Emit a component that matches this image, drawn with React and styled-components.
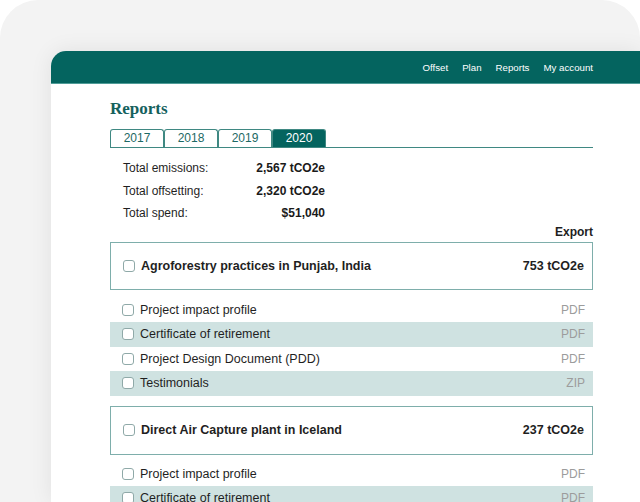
import React from 'react'
import styled, { createGlobalStyle } from 'styled-components'

const GlobalStyle = createGlobalStyle`
  html, body {
    margin: 0;
    padding: 0;
    background: #ffffff;
  }
  body {
    font-family: "Liberation Sans", Arial, sans-serif;
    color: #1f1f1f;
  }
`

const Backdrop = styled.div`
  width: 640px;
  height: 502px;
  box-sizing: border-box;
  background: #f3f3f3;
  border-radius: 38px 38px 0 0;
  padding: 51px 0 0 51px;
  overflow: hidden;
`

const AppWindow = styled.div`
  height: 100%;
  background: #ffffff;
  border-radius: 15px 0 0 0;
  box-shadow: 0 0 22px rgba(0, 0, 0, 0.08);
  overflow: hidden;
`

const TopBar = styled.header`
  height: 32px;
  background: #04645f;
  border-bottom: 1px solid #4f9c97;
  display: flex;
  justify-content: flex-end;
  align-items: center;
  gap: 14px;
  padding-right: 47px;
`

const NavLink = styled.a`
  color: #ffffff;
  font-size: 9.7px;
  text-decoration: none;
`

const Content = styled.main`
  padding: 16px 47px 0 59px;
`

const Title = styled.h1`
  margin: 0;
  font-family: "Liberation Serif", "DejaVu Serif", serif;
  font-size: 17px;
  font-weight: 700;
  color: #15615d;
  line-height: 18px;
`

const Tabs = styled.div`
  display: flex;
  margin-top: 11px;
  border-bottom: 1px solid #3f8882;
`

const Tab = styled.button`
  width: 54px;
  height: 18px;
  box-sizing: border-box;
  padding: 0;
  border: 1px solid #3f8882;
  border-bottom: none;
  border-radius: 3px 3px 0 0;
  background: ${p => (p.active ? '#04645f' : '#ffffff')};
  color: ${p => (p.active ? '#ffffff' : '#1d6964')};
  font-family: "Liberation Sans", Arial, sans-serif;
  font-size: 12px;
  line-height: 17px;
`

const Totals = styled.div`
  display: grid;
  grid-template-columns: 130px 72px;
  padding: 9px 0 0 13px;
  font-size: 12px;
  line-height: 22.5px;
`

const TotalValue = styled.span`
  text-align: right;
  font-weight: 700;
  color: #1a1a1a;
`

const ExportLabel = styled.div`
  text-align: right;
  font-size: 12px;
  font-weight: 700;
  line-height: 14px;
`

const ProjectCard = styled.div`
  margin-top: ${p => p.gap}px;
  height: ${p => p.height}px;
  box-sizing: border-box;
  border: 1px solid #7eaeab;
  display: flex;
  align-items: center;
  justify-content: space-between;
  padding: 0 8px 0 12px;
  font-size: 12.5px;
  font-weight: 700;
`

const Label = styled.label`
  display: flex;
  align-items: center;
  gap: 6px;
`

const Box = styled.span`
  width: 12px;
  height: 12px;
  box-sizing: border-box;
  border: 1px solid #8fa9a8;
  border-radius: 3px;
  background: #ffffff;
`

const Documents = styled.div`
  margin-top: ${p => p.gap}px;
`

const DocRow = styled.div`
  height: 24.5px;
  display: flex;
  align-items: center;
  justify-content: space-between;
  padding: 0 8px 0 12px;
  background: ${p => (p.shaded ? '#cfe2e1' : 'transparent')};
  font-size: 12.5px;
`

const FileType = styled.span`
  color: #9c9c9c;
  font-size: 12px;
`

const projects = [
  {
    name: 'Agroforestry practices in Punjab, India',
    amount: '753 tCO2e',
    gap: 3,
    height: 48,
    docsGap: 8,
    docs: [
      ['Project impact profile', 'PDF'],
      ['Certificate of retirement', 'PDF'],
      ['Project Design Document (PDD)', 'PDF'],
      ['Testimonials', 'ZIP']
    ]
  },
  {
    name: 'Direct Air Capture plant in Iceland',
    amount: '237 tCO2e',
    gap: 10,
    height: 49,
    docsGap: 7,
    docs: [
      ['Project impact profile', 'PDF'],
      ['Certificate of retirement', 'PDF'],
      ['Project Design Document (PDD)', 'PDF']
    ]
  }
]

const totals = [
  ['Total emissions:', '2,567 tCO2e'],
  ['Total offsetting:', '2,320 tCO2e'],
  ['Total spend:', '$51,040']
]

export default function App() {
  return (
    <>
      <GlobalStyle />
      <Backdrop>
        <AppWindow>
          <TopBar>
            {['Offset', 'Plan', 'Reports', 'My account'].map(item => (
              <NavLink key={item}>{item}</NavLink>
            ))}
          </TopBar>
          <Content>
            <Title>Reports</Title>
            <Tabs>
              {['2017', '2018', '2019', '2020'].map(year => (
                <Tab key={year} active={year === '2020'}>{year}</Tab>
              ))}
            </Tabs>
            <Totals>
              {totals.map(([label, value]) => (
                <React.Fragment key={label}>
                  <span>{label}</span>
                  <TotalValue>{value}</TotalValue>
                </React.Fragment>
              ))}
            </Totals>
            <ExportLabel>Export</ExportLabel>
            {projects.map(project => (
              <React.Fragment key={project.name}>
                <ProjectCard gap={project.gap} height={project.height}>
                  <Label>
                    <Box />
                    {project.name}
                  </Label>
                  <span>{project.amount}</span>
                </ProjectCard>
                <Documents gap={project.docsGap}>
                  {project.docs.map(([doc, type], idx) => (
                    <DocRow key={doc} shaded={idx % 2 === 1}>
                      <Label>
                        <Box />
                        {doc}
                      </Label>
                      <FileType>{type}</FileType>
                    </DocRow>
                  ))}
                </Documents>
              </React.Fragment>
            ))}
          </Content>
        </AppWindow>
      </Backdrop>
    </>
  )
}
